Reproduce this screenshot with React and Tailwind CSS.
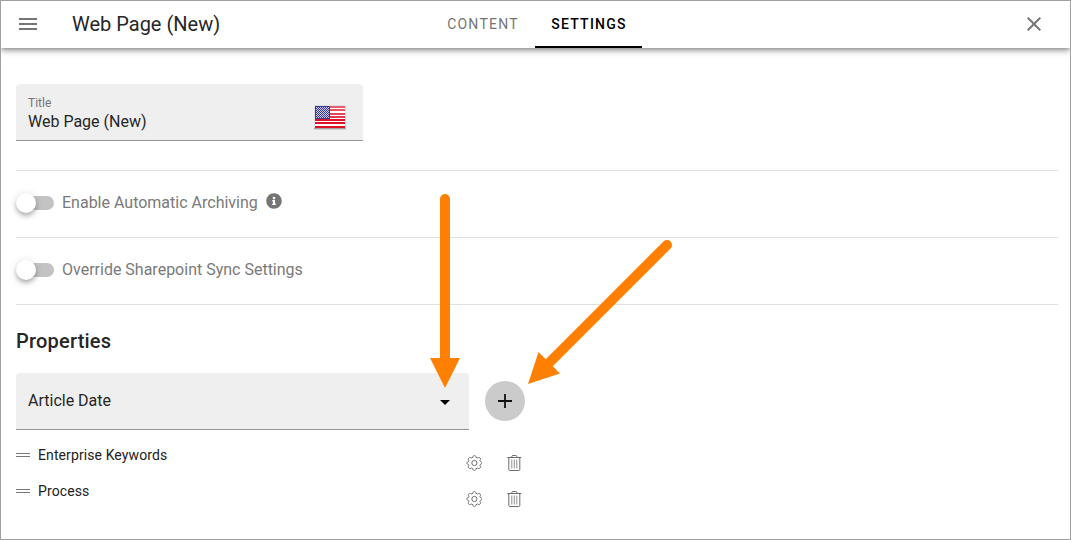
import React from "react";
import { FaInfoCircle } from "react-icons/fa";

function MdiIcon({ d, className }) {
  return (
    <svg viewBox="0 0 24 24" className={`h-6 w-6 fill-current ${className || ""}`}>
      <path d={d} />
    </svg>
  );
}

function UsFlag() {
  const canton = [];
  for (let row = 0; row < 11; row++) {
    for (let col = row % 2; col < 13; col += 2) {
      canton.push(<rect key={`${row}-${col}`} x={2 + col} y={2 + row} width="1" height="1" />);
    }
  }
  return (
    <svg viewBox="0 0 32 25" className="h-[25px] w-8" shapeRendering="crispEdges">
      <defs>
        <linearGradient id="gloss" x1="0" y1="0" x2="0" y2="1">
          <stop offset="0" stopColor="#fff" stopOpacity="0.34" />
          <stop offset="1" stopColor="#fff" stopOpacity="0.16" />
        </linearGradient>
      </defs>
      <rect width="32" height="24" fill="#dedede" />
      <rect y="23" width="32" height="1" fill="#a4a4a4" />
      <rect y="24" width="32" height="1" fill="#d4d4d4" />
      <rect x="1" y="1" width="30" height="22" fill="#fff" />
      {[1, 4, 8, 11, 14, 17, 21].map((y) => (
        <rect key={y} x="1" y={y} width="30" height="2" fill="#e01027" />
      ))}
      <rect x="16" y="1" width="15" height="12" fill="url(#gloss)" />
      <rect x="1" y="1" width="15" height="13" fill="#3a3a94" />
      <g fill="#c8c8ec">{canton}</g>
    </svg>
  );
}

function Switch() {
  return (
    <div className="flex h-5 w-[38px] items-center">
      <div className="z-10 h-5 w-5 shrink-0 rounded-full bg-white shadow-[0_2px_4px_-1px_rgba(0,0,0,.2),0_4px_5px_0_rgba(0,0,0,.14),0_1px_10px_0_rgba(0,0,0,.12)]" />
      <div className="-ml-4 h-3.5 w-[34px] shrink-0 rounded-full bg-[#c3c3c3]" />
    </div>
  );
}

function SwitchRow({ label, info }) {
  return (
    <div className="flex h-[67px] items-center border-b border-[#e0e0e0] pb-0.5">
      <Switch />
      <span className="ml-2 text-base text-[#7a7a7a]">{label}</span>
      {info && <FaInfoCircle className="mb-1 ml-2 h-4 w-4 text-[#757575]" />}
    </div>
  );
}

function GearIcon() {
  return (
    <svg viewBox="0 0 16 16" className="h-4 w-4 fill-none stroke-[#6c6c6c] stroke-[1]">
      <path
        strokeLinejoin="round"
        transform="translate(.4 0)"
        d="M6.5 2.3 C6.5-.2 9.5-.2 9.5 2.3 L11.1 3 C13 1.4 15.2 3.7 13.5 5.4 L14 6.6 C16 6.7 16 9.3 14 9.4 L13.5 10.6 C15.2 12.3 13 14.6 11.1 13 L9.5 13.7 C9.5 16.2 6.5 16.2 6.5 13.7 L4.9 13 C3 14.6.8 12.3 2.5 10.6 L2 9.4 C0 9.3 0 6.7 2 6.6 L2.5 5.4 C.8 3.7 3 1.4 4.9 3Z"
      />
      <circle cx="8.4" cy="8" r="2.6" />
    </svg>
  );
}

function TrashIcon() {
  return (
    <svg viewBox="0 0 16 16" className="h-4 w-4 fill-none stroke-[#6c6c6c] stroke-[1]">
      <path d="M1.3 2.5H15.3M5.8 2.5V1.5Q5.8.5 6.8.5H9.8Q10.8.5 10.8 1.5V2.5M2.8 2.5V14.5Q2.8 15.5 3.8 15.5H12.8Q13.8 15.5 13.8 14.5V2.5" />
      <path className="stroke-[#909090]" d="M5.8 4.5V13.5M8.3 4.5V13.5M10.8 4.5V13.5" />
    </svg>
  );
}

function PropertyRow({ name }) {
  return (
    <div className="flex h-9 items-start">
      <div className="mt-[15px] h-1 w-3.5 border-y border-[#777777]" />
      <span className="ml-2 mt-[7px] w-[428px] text-sm leading-5 tracking-[0.1px] text-[#222222]">{name}</span>
      <div className="mt-[17px] flex gap-6">
        <GearIcon />
        <TrashIcon />
      </div>
    </div>
  );
}

export default function App() {
  return (
    <div className="relative flex h-[540px] w-[1071px] flex-col overflow-hidden border border-[#a0a0a0] bg-white font-['Roboto',sans-serif] text-[#262626]">
      <header className="grid h-[47px] shrink-0 grid-cols-[428px_1fr_auto] items-stretch bg-white shadow-[0_2px_4px_-1px_rgba(0,0,0,.3),0_4px_5px_0_rgba(0,0,0,.16),0_1px_10px_0_rgba(0,0,0,.13)]">
        <div className="flex items-center pb-[1px] pl-[15px]">
          <MdiIcon className="text-[#757575]" d="M3 6h18v2H3V6m0 5h18v2H3v-2m0 5h18v2H3v-2Z" />
          <h1 className="ml-8 text-xl font-normal">Web Page (New)</h1>
        </div>
        <nav className="flex text-sm font-medium tracking-[1.25px]">
          <button className="w-[106px] pb-px pl-0.5 font-normal text-[#757575]">CONTENT</button>
          <button className="w-[107px] border-b-2 border-black pl-px pt-px text-black">SETTINGS</button>
        </nav>
        <div className="flex items-center pb-px pr-6">
          <MdiIcon
            className="text-[#757575]"
            d="M19 6.41L17.59 5L12 10.59L6.41 5L5 6.41L10.59 12L5 17.59L6.41 19L12 13.41L17.59 19L19 17.59L13.41 12L19 6.41Z"
          />
        </div>
      </header>

      <main className="flex flex-col pl-[15px] pr-3 pt-9">
        <div className="flex h-[57px] w-[347px] items-start justify-between rounded-t border-b border-[#949494] bg-[#efefef] pl-3 pr-[17px]">
          <div className="flex flex-col pt-[11px]">
            <label className="text-xs leading-4 text-[#757575]">Title</label>
            <span className="mt-px text-base leading-5">Web Page (New)</span>
          </div>
          <div className="pt-[21px]">
            <UsFlag />
          </div>
        </div>

        <div className="mt-[29px] h-px bg-[#e0e0e0]" />
        <SwitchRow label="Enable Automatic Archiving" info />
        <SwitchRow label="Override Sharepoint Sync Settings" />

        <h2 className="mt-5 text-xl leading-8 font-medium tracking-[0.2px]">Properties</h2>
        <div className="mt-4 flex items-start gap-4">
          <div className="flex h-[57px] w-[453px] items-center justify-between rounded-t border-b border-[#949494] bg-[#efefef] px-3">
            <span className="text-base">Article Date</span>
            <MdiIcon className="mt-0.5 text-black" d="M7 10l5 5l5-5z" />
          </div>
          <button className="mt-2 flex h-10 w-10 items-center justify-center rounded-full bg-[#cbcbcb]">
            <svg viewBox="0 0 24 24" className="h-6 w-6 fill-none stroke-[#111111] stroke-[1.8]">
              <path d="M12 5V19M5 12H19" />
            </svg>
          </button>
        </div>

        <div className="mt-2 flex flex-col">
          <PropertyRow name="Enterprise Keywords" />
          <PropertyRow name="Process" />
        </div>
      </main>

      <svg viewBox="1 1 1069 538" className="pointer-events-none absolute left-0 top-0 z-20 h-[538px] w-[1069px]">
        <g stroke="#ff8000" strokeWidth="10" strokeLinecap="round">
          <path d="M445 199V362" />
          <path d="M667 245L545 367" />
        </g>
        <g fill="#ff8000">
          <path d="M430 358H460L445 388Z" />
          <path d="M538.5 352L528 384L560 373.5Z" />
        </g>
      </svg>
    </div>
  );
}
